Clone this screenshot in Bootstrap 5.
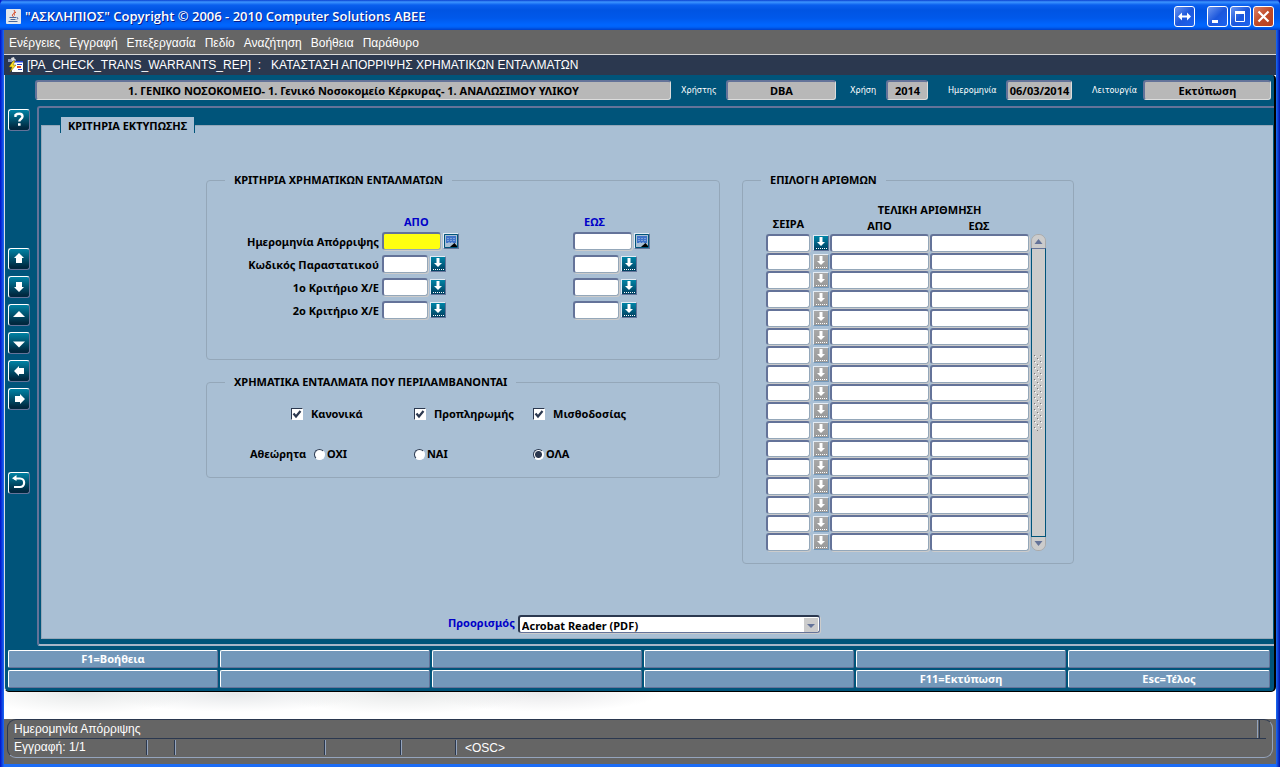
<!DOCTYPE html>
<html lang="el">
<head>
<meta charset="utf-8">
<meta name="viewport" content="width=device-width, initial-scale=1">
<title>ΑΣΚΛΗΠΙΟΣ</title>
<link href="https://cdn.jsdelivr.net/npm/bootstrap@5.3.0/dist/css/bootstrap.min.css" rel="stylesheet">
<style>
  :root { --teal:#00547a; --pane:#a9bfd4; --slate:#647399; --mist:#94a7b9; --night:#2b384f; --key:#7398ba; }
  body { font:bold 11px/16px "Noto Sans","Liberation Sans",sans-serif; color:#000; background:#0046e0; }
  .thin { font-family:"Liberation Sans",sans-serif; font-weight:400; font-size:12px; }
  .frame { min-height:100vh; padding:0 4px 4px; background:linear-gradient(90deg,#0011c8,#1c6cf5 4px,#1c6cf5 calc(100% - 4px),#0011a8); }

  .titlebar { height:30px; margin:0 -4px; padding:2px 6px 0; color:#fff;
    background:linear-gradient(#0a3fd0,#3d95ff 2px,#0a5fee 5px,#0054e3 10px,#0058ea 18px,#0066ff 25px,#0062f8 27px,#0040c8 30px); border-radius:5px 5px 0 0; }
  .titlebar h1 { font:600 13px/18px "Open Sans",sans-serif; text-shadow:1px 1px #0a1e8c; }
  .winbtns { gap:2px; }
  .winbtn { width:21px; height:21px; padding:0; border:1px solid #fff; border-radius:3px; background:linear-gradient(135deg,#6c96f0,#1c57dc 50%,#1c63f0); }
  .winbtn.mover { margin-right:10px; }
  .winbtn.close-x { background:linear-gradient(135deg,#dc8068,#c04a28 50%,#b84020); }
  .winbtn svg, .tool svg, .lov svg, .cal svg { display:block; }

  .menubar { height:24px; background:#656565; padding:2px 5px 0; gap:9px; }
  .menubar a { color:#fff; text-decoration:none; }
  .caption-row { height:21px; background:var(--night); color:#fff; border-top:1px solid #d8d8d8; padding-left:3px; }
  .caption-row h2 { font:400 12px/16px "Liberation Sans",sans-serif; white-space:pre; }

  .mdi { background:var(--teal); border-left:1px solid #d8e0e8; border-right:2px solid #000; border-bottom:1px solid #000; border-radius:0 4px 5px 5px; padding-bottom:3px; overflow:hidden; }
  .mdi-back { background:#fff; }
  .info { padding:5px 3px 0 30px; height:31px; }
  .info label { color:#fff; font:400 9px/20px "DejaVu Sans Condensed",sans-serif; }
  .info input { height:20px; padding:0; text-align:center; background:#b8b8b8; color:#000; font:bold 11px "Noto Sans",sans-serif; min-width:0;
    border:1px solid; border-color:var(--slate) #dcdcdc #dcdcdc var(--slate); border-width:2px 1px 1px 2px; border-radius:3px; }

  .tools { width:32px; padding:3px 0 0 3px; gap:6px; }
  .tool { width:22px; height:22px; padding:0; border:1px solid; border-color:#fff var(--slate) var(--slate) #fff; border-radius:3px; background:linear-gradient(#0082a4,#00283f 90%); }
  .tool.first { margin-bottom:111px; }
  .tool.last { margin-top:56px; }

  .well-box { border:solid var(--slate); border-width:2px 0 2px 2px; border-bottom-color:#a9b6c8; border-radius:3px 0 0 3px; padding:9px 1px 5px 2px; }
  .tabname { font:bold 11px/18px "Noto Sans",sans-serif; height:16px; background:var(--pane); border:solid var(--teal); border-width:0 1px; margin:0 0 -8px 19px; padding:0 7px; position:relative; }
  .pane { background:var(--pane); border:1px solid var(--mist); border-right:0; padding:46px 20px 5px 164px; }

  .group { border:1px solid var(--mist); border-radius:4px; }
  .group legend { float:none; width:auto; font:bold 11px/16px "Noto Sans",sans-serif; margin:0 0 0 18px; padding:0 9px 0 9px; }
  .left { width:514px; }
  .right { width:332px; }

  .criteria { display:grid; grid-template-columns:175px 191px 1fr; grid-template-rows:17px; grid-auto-rows:23px; padding:27px 0 35px; }
  .criteria .lab { text-align:right; padding-right:3px; line-height:20px; }
  .criteria > div { gap:2px; }
  .blue { color:#0000c8; }
  .criteria .blue { line-height:14px; }
  .field { border:solid; border-width:2px 1px 1px 2px; border-color:var(--slate) var(--mist) var(--mist) var(--slate); border-radius:3px; box-shadow:1px 1px #ccc; background:#fff; padding:0 2px; height:18px; font:inherit; line-height:14px; min-width:0; outline:0; }
  .w-date { width:59px; }
  .w-code { width:46px; }
  .now { background:#ffff10; }
  .lov, .cal { width:16px; height:16px; margin-top:1px; padding:0; border:1px solid; border-color:#e4ecf4 #647399 #647399 #e4ecf4; background:#7398ba; flex:none; }
  .lov svg { background:linear-gradient(#0084a6,#003f60); }
  .lov:disabled svg { background:linear-gradient(#a8a8a8,#989898); }
  .lov:disabled { border-color:#e4ecf4 #7398ba #7398ba #e4ecf4; }

  .checks { display:grid; grid-template-columns:107px 119px 1fr; padding:16px 0 0 84px; }
  .radios { display:grid; grid-template-columns:64px 100px 119px 1fr; padding:24px 0 15px 43px; }
  .radios label { gap:2px; }
  .tick, .dot { appearance:none; margin:0; border:1px solid; border-color:var(--night) #fff #fff var(--night); background:#fff; flex:none; }
  .tick { width:12px; height:12px; }
  .tick:checked { background:#fff url("data:image/svg+xml,%3Csvg xmlns='http://www.w3.org/2000/svg' viewBox='0 0 10 10'%3E%3Cpath d='M1.5 4.5l2.5 3L8.500 2' fill='none' stroke='%232b384f' stroke-width='2.200'/%3E%3C/svg%3E"); }
  .dot { width:11px; height:11px; border-radius:50%; }
  .dot:checked { background:radial-gradient(circle,var(--night) 0 3px,#fff 4px); }

  .numbers { padding:14px 0 11px 23px; }
  .heads { display:grid; grid-template-columns:45px 19px 99px 100px; text-align:center; line-height:16px; }
  .heads .tall { grid-row:span 2; line-height:20px; }
  .heads .wide { grid-column:span 2; }
  .rowsgrid { display:grid; grid-auto-rows:minmax(0,1fr); height:318px; width:263px; }
  .rowsgrid > div { display:grid; grid-template-columns:44px 18px 99px 99px; grid-template-rows:minmax(0,1fr); column-gap:1px; }
  .rowsgrid .field { height:auto; width:100%; margin:0 0 1px; }
  .rowsgrid .lov { margin:1px 0 0 2px; }
  .bar { width:15px; background:#ccc; border-radius:7px; border:1px solid #aaa; margin-left:2px; height:317px; }
  .bar button { border:0; padding:0; height:13px; background:#ccc; border-radius:7px; line-height:0; }
  .thumb { border:1px solid var(--teal); border-top-color:var(--slate); background:#ccc; margin:0 -1px; }

  .dest { padding:51px 0 0 242px; }
  .dest label { margin-right:3px; }
  .combo { width:302px; position:relative; }
  .combo select { display:block; appearance:none; width:100%; height:18px; padding:1px 2px 0; line-height:14px; font:inherit; color:#000; background:#fff; border:1px solid; border-width:2px 1px 1px 2px; border-color:var(--night) var(--slate) var(--slate) var(--night); border-radius:3px; box-shadow:1px 1px #ccc; }
  .combo svg { position:absolute; right:2px; top:3px; background:#ccc; pointer-events:none; }

  .keys { display:grid; grid-template-columns:repeat(5,210fr) 202fr; grid-auto-rows:18px; gap:2px; padding:4px 4px 0 3px; }
  .keys button { font:inherit; line-height:16px; color:#fff; padding:0; background:var(--key); border:1px solid; border-color:#fff var(--slate) var(--slate) #fff; border-radius:2px; }

  .backdrop { min-height:27px; background:
    radial-gradient(ellipse 110px 22px at 80px 0,#e6e8e8,transparent), radial-gradient(ellipse 130px 18px at 230px 2px,#e6e8ea,transparent),
    radial-gradient(ellipse 130px 22px at 400px 0,#e6e8e8,transparent), radial-gradient(ellipse 120px 20px at 540px 0,#e8e8ea,transparent), #fff; }
  .status { background:#656565; color:#fff; padding:0 3px 6px; }
  .statbox { border:1px solid; border-color:var(--night) #94a4bd #94a4bd var(--night); border-radius:9px; padding:0 6px; line-height:18px; }
  .line1 { border-bottom:1px solid var(--night); line-height:18px; }
  .line1 i { border-left:1px solid #94a4bd; border-right:1px solid var(--night); width:3px; margin-right:6px; }
  .line2 span { border-right:1px solid #94a4bd; box-shadow:inset -1px 0 var(--night); height:15px; line-height:15px; margin-top:1px; }
  .line2 .s1 { width:134px; } .line2 .s2 { width:28px; } .line2 .s3 { width:150px; } .line2 .s4 { width:76px; } .line2 .s5 { width:55px; }
</style>
</head>
<body>
<svg class="d-none" aria-hidden="true">
  <symbol id="lov" viewBox="0 0 14 14"><path d="M5.500 1h3v5h2.500L7 10 3 6h2.500z" fill="#fff"/><path d="M2 12.500h11" stroke="#fff" stroke-dasharray="1 1"/></symbol>
  <symbol id="cal" viewBox="0 0 14 14"><path d="M.5.500h13v13H.5z" fill="#a9bfd4" stroke="#00547a"/><path d="M2 2h10v7H2z" fill="#3f72c8"/><path d="M3 4.500h8M3 6.500h8M4 8.500h5" stroke="#7c9fd8" stroke-dasharray="2 1"/><path d="M6 13h7v-1l-2.500-3L7 12z" fill="#000"/></symbol>
</svg>
<div class="frame d-flex flex-column">
  <header class="titlebar d-flex align-items-center">
    <svg width="15" height="15" viewBox="0 0 15 15" class="me-1"><rect width="15" height="15" rx="1" fill="#e4e8ec"/><path d="M8 1q2 2-.5 3.500T7.500 8M10 3Q7 4.500 8.500 6.500" fill="none" stroke="#d8502c"/><path d="M3.500 8.500h7M4.500 10.500h5M2.500 12.500h9M11 8.500q2 .5 0 2" fill="none" stroke="#4a6a9c"/></svg>
    <h1 class="m-0 me-auto">"ΑΣΚΛΗΠΙΟΣ" Copyright © 2006 - 2010 Computer Solutions ABEE</h1>
    <div class="winbtns d-flex">
      <button class="winbtn mover" aria-label="Μετακίνηση"><svg width="19" height="19"><path d="M3 9.500l4-4v3h5v-3l4 4-4 4v-3H7v3z" fill="#fff"/></svg></button>
      <button class="winbtn" aria-label="Ελαχιστοποίηση"><svg width="19" height="19"><path d="M4 13h6v3H4z" fill="#fff"/></svg></button>
      <button class="winbtn" aria-label="Μεγιστοποίηση"><svg width="19" height="19"><path d="M4.500 5.500h9v9h-9z" fill="none" stroke="#fff"/><path d="M4 4h10v3H4z" fill="#fff"/></svg></button>
      <button class="winbtn close-x" aria-label="Κλείσιμο"><svg width="19" height="19"><path d="M4.500 4.500l10 10m0-10l-10 10" stroke="#fff" stroke-width="2.200"/></svg></button>
    </div>
  </header>
  <nav class="menubar thin d-flex align-items-center">
    <a href="#">Ενέργειες</a><a href="#">Εγγραφή</a><a href="#">Επεξεργασία</a><a href="#">Πεδίο</a><a href="#">Αναζήτηση</a><a href="#">Βοήθεια</a><a href="#">Παράθυρο</a>
  </nav>
  <div class="caption-row d-flex align-items-center">
    <svg width="16" height="16" viewBox="0 0 16 16" class="me-1"><path d="M1 2h8v3H1z" fill="#8c96b4"/><path d="M4 1l3-1 1 3-3 1z" fill="#ddd"/><path d="M5 5h11v10H5z" fill="#fff"/><path d="M5 4h11v1.500H5z" fill="#2040d0"/><path d="M10 7.500h5M11 12.500h4" stroke="#2040d0"/><path d="M10 10h4" stroke="#e05020" stroke-width="2"/><path d="M6 4L2 10h3l-2 5 6-7H6l2-4z" fill="#ffe020" stroke="#6c5c00" stroke-width=".5"/></svg>
    <h2 class="m-0">[PA_CHECK_TRANS_WARRANTS_REP]  :   ΚΑΤΑΣΤΑΣΗ ΑΠΟΡΡΙΨΗΣ ΧΡΗΜΑΤΙΚΩΝ ΕΝΤΑΛΜΑΤΩΝ</h2>
  </div>

  <div class="mdi-back flex-grow-1 d-flex flex-column">
  <main class="mdi flex-grow-1 d-flex flex-column">
    <div class="info d-flex">
      <input class="flex-grow-1" readonly aria-label="Μονάδα" value="1. ΓΕΝΙΚΟ ΝΟΣΟΚΟΜΕΙΟ- 1. Γενικό Νοσοκομείο Κέρκυρας- 1. ΑΝΑΛΩΣΙΜΟΥ ΥΛΙΚΟΥ">
      <label for="usr" style="width:55px;padding-left:10px">Χρήστης</label><input id="usr" readonly value="DBA" style="width:110px">
      <label for="yr" style="width:50px;padding-left:14px">Χρήση</label><input id="yr" readonly value="2014" style="width:42px">
      <label for="dt" style="width:78px;padding-left:20px">Ημερομηνία</label><input id="dt" readonly value="06/03/2014" style="width:66px">
      <label for="md" style="width:71px;padding-left:20px">Λειτουργία</label><input id="md" readonly value="Εκτύπωση" style="width:128px">
    </div>
    <div class="d-flex flex-grow-1">
      <div class="tools d-flex flex-column flex-shrink-0">
        <button class="tool first" aria-label="Βοήθεια"><svg width="20" height="20" viewBox="0 0 20 20"><path d="M6.500 7V5q1.500-1.200 3.800-1.200 3.200 0 3.200 2.700c0 2.500-3.200 2.500-3.200 5M9 14.500h2.600" fill="none" stroke="#fff" stroke-width="2.400"/></svg></button>
        <button class="tool" aria-label="Πάνω"><svg width="20" height="20"><path d="M10 4l5 5h-2v5H7V9H5z" fill="#fff"/></svg></button>
        <button class="tool" aria-label="Κάτω"><svg width="20" height="20"><path d="M10 15l5-5h-2V5H7v5H5z" fill="#fff"/></svg></button>
        <button class="tool" aria-label="Προηγούμενη σελίδα"><svg width="20" height="20"><path d="M10 6l6 6H4z" fill="#fff"/></svg></button>
        <button class="tool" aria-label="Επόμενη σελίδα"><svg width="20" height="20"><path d="M10 14.500l6-6H4z" fill="#fff"/></svg></button>
        <button class="tool" aria-label="Αριστερά"><svg width="20" height="20"><path d="M5 10l5-5v2h5v6h-5v2z" fill="#fff"/></svg></button>
        <button class="tool" aria-label="Δεξιά"><svg width="20" height="20"><path d="M16 10l-5-5v2H6v6h5v2z" fill="#fff"/></svg></button>
        <button class="tool last" aria-label="Επιστροφή"><svg width="20" height="20"><path d="M7.500 2v6L3 5.200z" fill="#fff"/><path d="M5 5.500h6c5.500 0 5.500 8.500 0 8.500H5" fill="none" stroke="#fff" stroke-width="2.200"/></svg></button>
      </div>
      <div class="well-box flex-grow-1 d-flex flex-column align-items-start">
        <h3 class="tabname">ΚΡΙΤΗΡΙΑ ΕΚΤΥΠΩΣΗΣ</h3>
        <form class="pane flex-grow-1 align-self-stretch">
          <div class="d-flex" style="gap:22px">
            <div class="left">
              <fieldset class="group" style="margin-bottom:14px">
                <legend>ΚΡΙΤΗΡΙΑ ΧΡΗΜΑΤΙΚΩΝ ΕΝΤΑΛΜΑΤΩΝ</legend>
                <div class="criteria">
                  <span></span><span class="blue" style="padding-left:22px">ΑΠΟ</span><span class="blue" style="padding-left:11px">ΕΩΣ</span>
                  <label class="lab" for="d1">Ημερομηνία Απόρριψης</label>
                  <div class="d-flex"><input id="d1" class="field w-date now"><button type="button" class="cal" aria-label="Ημερολόγιο"><svg width="14" height="14"><use href="#cal"/></svg></button></div>
                  <div class="d-flex"><input aria-label="Ημερομηνία Απόρριψης έως" class="field w-date"><button type="button" class="cal" aria-label="Ημερολόγιο"><svg width="14" height="14"><use href="#cal"/></svg></button></div>
                  <label class="lab" for="k1">Κωδικός Παραστατικού</label>
                  <div class="d-flex"><input id="k1" class="field w-code"><button type="button" class="lov" aria-label="Λίστα"><svg width="14" height="14"><use href="#lov"/></svg></button></div>
                  <div class="d-flex"><input aria-label="Κωδικός έως" class="field w-code"><button type="button" class="lov" aria-label="Λίστα"><svg width="14" height="14"><use href="#lov"/></svg></button></div>
                  <label class="lab" for="k2">1ο Κριτήριο Χ/Ε</label>
                  <div class="d-flex"><input id="k2" class="field w-code"><button type="button" class="lov" aria-label="Λίστα"><svg width="14" height="14"><use href="#lov"/></svg></button></div>
                  <div class="d-flex"><input aria-label="1ο Κριτήριο έως" class="field w-code"><button type="button" class="lov" aria-label="Λίστα"><svg width="14" height="14"><use href="#lov"/></svg></button></div>
                  <label class="lab" for="k3">2ο Κριτήριο Χ/Ε</label>
                  <div class="d-flex"><input id="k3" class="field w-code"><button type="button" class="lov" aria-label="Λίστα"><svg width="14" height="14"><use href="#lov"/></svg></button></div>
                  <div class="d-flex"><input aria-label="2ο Κριτήριο έως" class="field w-code"><button type="button" class="lov" aria-label="Λίστα"><svg width="14" height="14"><use href="#lov"/></svg></button></div>
                </div>
              </fieldset>
              <fieldset class="group">
                <legend>ΧΡΗΜΑΤΙΚΑ ΕΝΤΑΛΜΑΤΑ ΠΟΥ ΠΕΡΙΛΑΜΒΑΝΟΝΤΑΙ</legend>
                <div class="checks">
                  <label class="d-flex align-items-center"><input type="checkbox" class="tick" checked><span class="ms-2">Κανονικά</span></label>
                  <label class="d-flex align-items-center ps-3"><input type="checkbox" class="tick" checked><span class="ms-2">Προπληρωμής</span></label>
                  <label class="d-flex align-items-center ps-3"><input type="checkbox" class="tick" checked><span class="ms-2">Μισθοδοσίας</span></label>
                </div>
                <div class="radios">
                  <span>Αθεώρητα</span>
                  <label class="d-flex align-items-center"><input type="radio" name="ath" class="dot">ΟΧΙ</label>
                  <label class="d-flex align-items-center"><input type="radio" name="ath" class="dot">ΝΑΙ</label>
                  <label class="d-flex align-items-center"><input type="radio" name="ath" class="dot" checked>ΟΛΑ</label>
                </div>
              </fieldset>
            </div>
            <fieldset class="group right">
              <legend>ΕΠΙΛΟΓΗ ΑΡΙΘΜΩΝ</legend>
              <div class="numbers">
                <div class="heads">
                  <span class="tall align-self-end">ΣΕΙΡΑ</span><span class="tall"></span>
                  <span class="wide">ΤΕΛΙΚΗ ΑΡΙΘΜΗΣΗ</span>
                  <span>ΑΠΟ</span><span>ΕΩΣ</span>
                </div>
                <div class="d-flex">
                  <div class="rowsgrid" id="rows"></div>
                  <div class="bar d-flex flex-column">
                    <button type="button" aria-label="Πάνω"><svg width="13" height="13"><path d="M6.500 4l4 5h-8z" fill="#647399"/></svg></button>
                    <div class="thumb flex-grow-1 d-flex align-items-center justify-content-center">
                      <svg width="9" height="76"><defs><pattern id="grip" width="6" height="6" patternUnits="userSpaceOnUse"><path d="M0 0h1v1H0zM3 3h1v1H3z" fill="#777"/><path d="M1 1h1v1H1zM4 4h1v1H4z" fill="#fff"/></pattern></defs><rect width="9" height="76" fill="url(#grip)"/></svg>
                    </div>
                    <button type="button" aria-label="Κάτω"><svg width="13" height="13"><path d="M6.500 9l4-5h-8z" fill="#647399"/></svg></button>
                  </div>
                </div>
              </div>
            </fieldset>
          </div>
          <div class="dest d-flex">
            <label for="dest" class="blue">Προορισμός</label>
            <div class="combo"><select id="dest"><option>Acrobat Reader (PDF)</option></select><svg width="14" height="14"><path d="M3 6h8l-4 4z" fill="#647399"/></svg></div>
          </div>
        </form>
      </div>
    </div>
    <div class="keys">
      <button>F1=Βοήθεια</button><button aria-label="F2"></button><button aria-label="F3"></button><button aria-label="F4"></button><button aria-label="F5"></button><button aria-label="F6"></button>
      <button aria-label="F7"></button><button aria-label="F8"></button><button aria-label="F9"></button><button aria-label="F10"></button><button>F11=Εκτύπωση</button><button>Esc=Τέλος</button>
    </div>
  </main>
  </div>
  <div class="backdrop"></div>
  <footer class="status thin">
    <div class="statbox">
      <div class="line1 d-flex justify-content-between"><span>Ημερομηνία Απόρριψης</span><i></i></div>
      <div class="line2 d-flex"><span class="s1">Εγγραφή: 1/1</span><span class="s2"></span><span class="s3"></span><span class="s4"></span><span class="s5"></span><div class="ps-2">&lt;OSC&gt;</div></div>
    </div>
  </footer>
</div>
<script src="https://cdn.jsdelivr.net/npm/bootstrap@5.3.0/dist/js/bootstrap.bundle.min.js"></script>
<script>
  // Seventeen number-range rows; only the first has an active list button.
  document.getElementById('rows').innerHTML = Array.from({length: 17}, (_, i) => `
    <div><input class="field" aria-label="Σειρά ${i + 1}">
    <button type="button" class="lov" aria-label="Λίστα" ${i ? 'disabled' : ''}><svg width="14" height="14"><use href="#lov"/></svg></button>
    <input class="field" aria-label="Από ${i + 1}"><input class="field" aria-label="Έως ${i + 1}"></div>`).join('');
</script>
</body>
</html>
